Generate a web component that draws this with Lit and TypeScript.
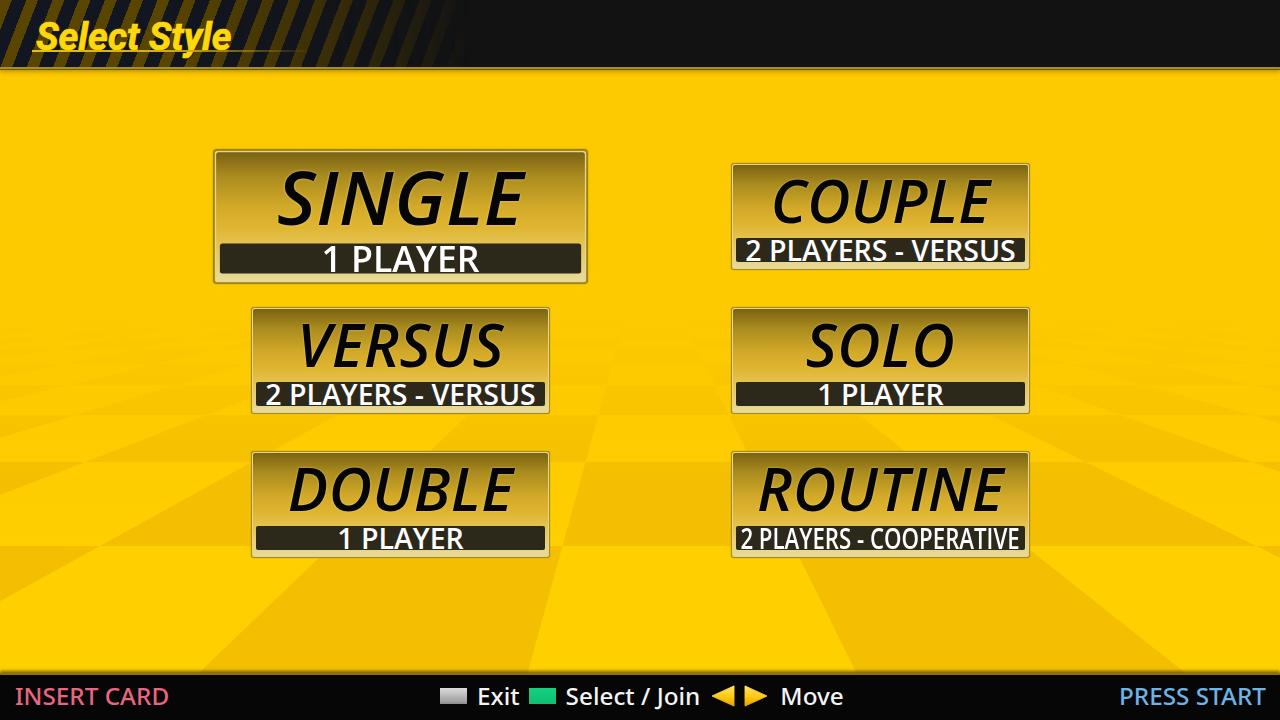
import { LitElement, html, css, svg } from "lit";
import { customElement } from "lit/decorators.js";

const VX = 645, VY = 245, BASE = 668;
const ROWS = [700, 546, 462, 415, 385, 364, 349, 337.5, 328, 321, 315, 310, 306];
const px = (k: number, y: number) => {
  const x0 = 204 + 325 * k;
  return VX + ((x0 - VX) * (y - VY)) / (BASE - VY);
};

function floorCells() {
  const out: unknown[] = [];
  for (let r = 0; r < ROWS.length - 1; r++) {
    const yb = ROWS[r], yt = ROWS[r + 1];
    for (let k = -12; k <= 14; k++) {
      if (((k + r) % 2 + 2) % 2 !== 0) continue;
      const pts = `${px(k, yb)},${yb} ${px(k + 1, yb)},${yb} ${px(k + 1, yt)},${yt} ${px(k, yt)},${yt}`;
      out.push(svg`<polygon points=${pts} fill="url(#cellFade)"></polygon>`);
    }
  }
  return out;
}

interface Mode { title: string; sub: string; squeeze?: number; selected?: boolean; }

const MODES: Mode[] = [
  { title: "SINGLE", sub: "1 PLAYER", selected: true },
  { title: "COUPLE", sub: "2 PLAYERS - VERSUS" },
  { title: "VERSUS", sub: "2 PLAYERS - VERSUS" },
  { title: "SOLO", sub: "1 PLAYER" },
  { title: "DOUBLE", sub: "1 PLAYER" },
  { title: "ROUTINE", sub: "2 PLAYERS - COOPERATIVE", squeeze: 0.78 },
];

@customElement("app-root")
export class AppRoot extends LitElement {
  static styles = css`
    :host {
      display: flex;
      flex-direction: column;
      position: relative;
      width: 1280px;
      height: 720px;
      overflow: hidden;
      background: linear-gradient(180deg, #fdc900 0%, #fdca00 55%, #ffd000 80%);
      font-family: "Noto Sans", "Open Sans", sans-serif;
    }
    .floor { position: absolute; left: 0; top: 0; width: 1280px; height: 720px; }
    .top {
      position: relative;
      height: 69px;
      flex: none;
      background: #121212;
      border-bottom: 2px solid #a8901c;
      box-shadow: 0 1px 0 #6a5400, 0 3px 4px rgba(120, 90, 0, 0.45);
      box-sizing: border-box;
      padding: 13px 0 0 36px;
    }
    .stripes {
      position: absolute;
      left: 0; top: 0; bottom: 0;
      width: 470px;
      background: repeating-linear-gradient(111deg, #5a4500 0 11px, #121620 11px 24.5px);
      -webkit-mask-image: linear-gradient(90deg, #000 0%, #000 35%, rgba(0,0,0,0.55) 70%, transparent 100%);
      mask-image: linear-gradient(90deg, #000 0%, #000 35%, rgba(0,0,0,0.55) 70%, transparent 100%);
    }
    .heading {
      position: relative;
      font-family: Roboto, sans-serif;
      font-weight: 700;
      font-style: italic;
      font-size: 37.8px;
      line-height: 48px;
      color: #ffd80c;
      -webkit-text-stroke: 0.7px #ffd80c;
      text-shadow: 0 0 2px #5a4500, 1px 1px 1px #1a1400;
    }
    .rule {
      position: absolute;
      left: 32px;
      top: 50px;
      width: 280px;
      height: 2px;
      background: linear-gradient(90deg, #e8c010 0%, #d0aa10 50%, transparent 100%);
    }
    .main {
      position: relative;
      flex: 1;
      display: grid;
      grid-template-columns: 299px 299px;
      grid-auto-rows: 107px;
      column-gap: 181px;
      row-gap: 37px;
      padding: 94px 0 0 251px;
      box-sizing: border-box;
      align-content: start;
    }
    .card {
      box-sizing: border-box;
      display: flex;
      flex-direction: column;
      align-items: stretch;
      border: 1px solid #a58a1c;
      border-radius: 3px;
      padding: 1px;
      background: #e6d690;
      box-shadow: 0 0 1px #8a7010;
    }
    .card.sel { transform: scale(1.25); }
    .face {
      flex: 1;
      display: flex;
      flex-direction: column;
      border-radius: 2px;
      padding: 0 3px 6px;
      background: linear-gradient(180deg, #7a6212 0%, #a88a1e 18%, #d2a928 42%, #dfb530 58%, #e6c658 74%, #e8da98 100%);
    }
    .title {
      flex: 1;
      display: flex;
      align-items: center;
      justify-content: center;
      font-family: "Open Sans", "Noto Sans", sans-serif;
      font-style: italic;
      font-weight: 600;
      font-size: 60px;
      letter-spacing: 0.4px;
      line-height: 67px;
      height: 70px;
      padding-bottom: 3px;
      box-sizing: border-box;
      color: #050505;
      text-shadow: 0 0 2px rgba(255, 235, 150, 0.7);
    }
    .bar {
      height: 24px;
      background: #2c291b;
      border-radius: 2px;
      display: flex;
      align-items: center;
      justify-content: center;
      color: #fff;
      font-family: "Open Sans", "Noto Sans", sans-serif;
      font-weight: 600;
      font-size: 28.5px;
      line-height: 24px;
      white-space: nowrap;
    }
    .bar span { display: inline-block; }
    .bottom {
      position: relative;
      height: 47px;
      flex: none;
      background: #060606;
      border-top: 2px solid #8a7210;
      box-shadow: 0 -2px 3px rgba(70, 55, 0, 0.7);
      display: flex;
      align-items: center;
      justify-content: space-between;
      padding: 0 14px 4px 15px;
      box-sizing: border-box;
      font-size: 24.3px;
      font-weight: 500;
    }
    .insert { color: #e8667f; }
    .press { color: #6fb2e4; }
    .legend {
      position: absolute;
      left: 440px;
      top: 0; bottom: 4px;
      display: flex;
      align-items: center;
      color: #f4f4f4;
    }
    .key { width: 27px; height: 16px; flex: none; }
    .key.grey { background: linear-gradient(180deg, #dcdcdc, #a0a0a0 85%, #8a8a8a); margin-right: 10px; }
    .key.green { background: linear-gradient(180deg, #14d080, #0cc070); margin: 0 10px 0 9px; }
    .arrows { display: flex; gap: 9px; margin: 0 12px 0 11px; }
    .arrows svg { display: block; }
  `;

  private card(m: Mode) {
    const style = m.squeeze ? `transform: scaleX(${m.squeeze})` : "";
    return html`<div class="card ${m.selected ? "sel" : ""}">
      <div class="face">
        <div class="title">${m.title}</div>
        <div class="bar"><span style=${style}>${m.sub}</span></div>
      </div>
    </div>`;
  }

  render() {
    return html`
      <svg class="floor" viewBox="0 0 1280 720" aria-hidden="true">
        <defs>
          <linearGradient id="cellFade" gradientUnits="userSpaceOnUse" x1="0" y1="305" x2="0" y2="480">
            <stop offset="0" stop-color="#f3bf00" stop-opacity="0"></stop>
            <stop offset="0.5" stop-color="#f3bf00" stop-opacity="0.4"></stop>
            <stop offset="1" stop-color="#f3bf00" stop-opacity="1"></stop>
          </linearGradient>
        </defs>
        ${floorCells()}
      </svg>
      <header class="top">
        <div class="stripes"></div>
        <div class="heading">Select Style</div>
        <div class="rule"></div>
      </header>
      <main class="main">${MODES.map((m) => this.card(m))}</main>
      <footer class="bottom">
        <span class="insert">INSERT CARD</span>
        <div class="legend">
          <span class="key grey"></span><span>Exit</span>
          <span class="key green"></span><span>Select / Join</span>
          <span class="arrows">
            <svg width="24" height="22" viewBox="-1 -1 26 24"><defs><linearGradient id="ag" x1="0" y1="0" x2="0" y2="1"><stop offset="0" stop-color="#ffe468"></stop><stop offset="0.55" stop-color="#fcc810"></stop><stop offset="1" stop-color="#e6a400"></stop></linearGradient></defs><polygon points="0,11 24,0 24,22" fill="url(#ag)" stroke="url(#ag)" stroke-width="1" stroke-linejoin="round"></polygon></svg>
            <svg width="24" height="22" viewBox="-1 -1 26 24"><polygon points="24,11 0,0 0,22" fill="url(#ag)" stroke="url(#ag)" stroke-width="1" stroke-linejoin="round"></polygon></svg>
          </span>
          <span>Move</span>
        </div>
        <span class="press">PRESS START</span>
      </footer>
    `;
  }
}
